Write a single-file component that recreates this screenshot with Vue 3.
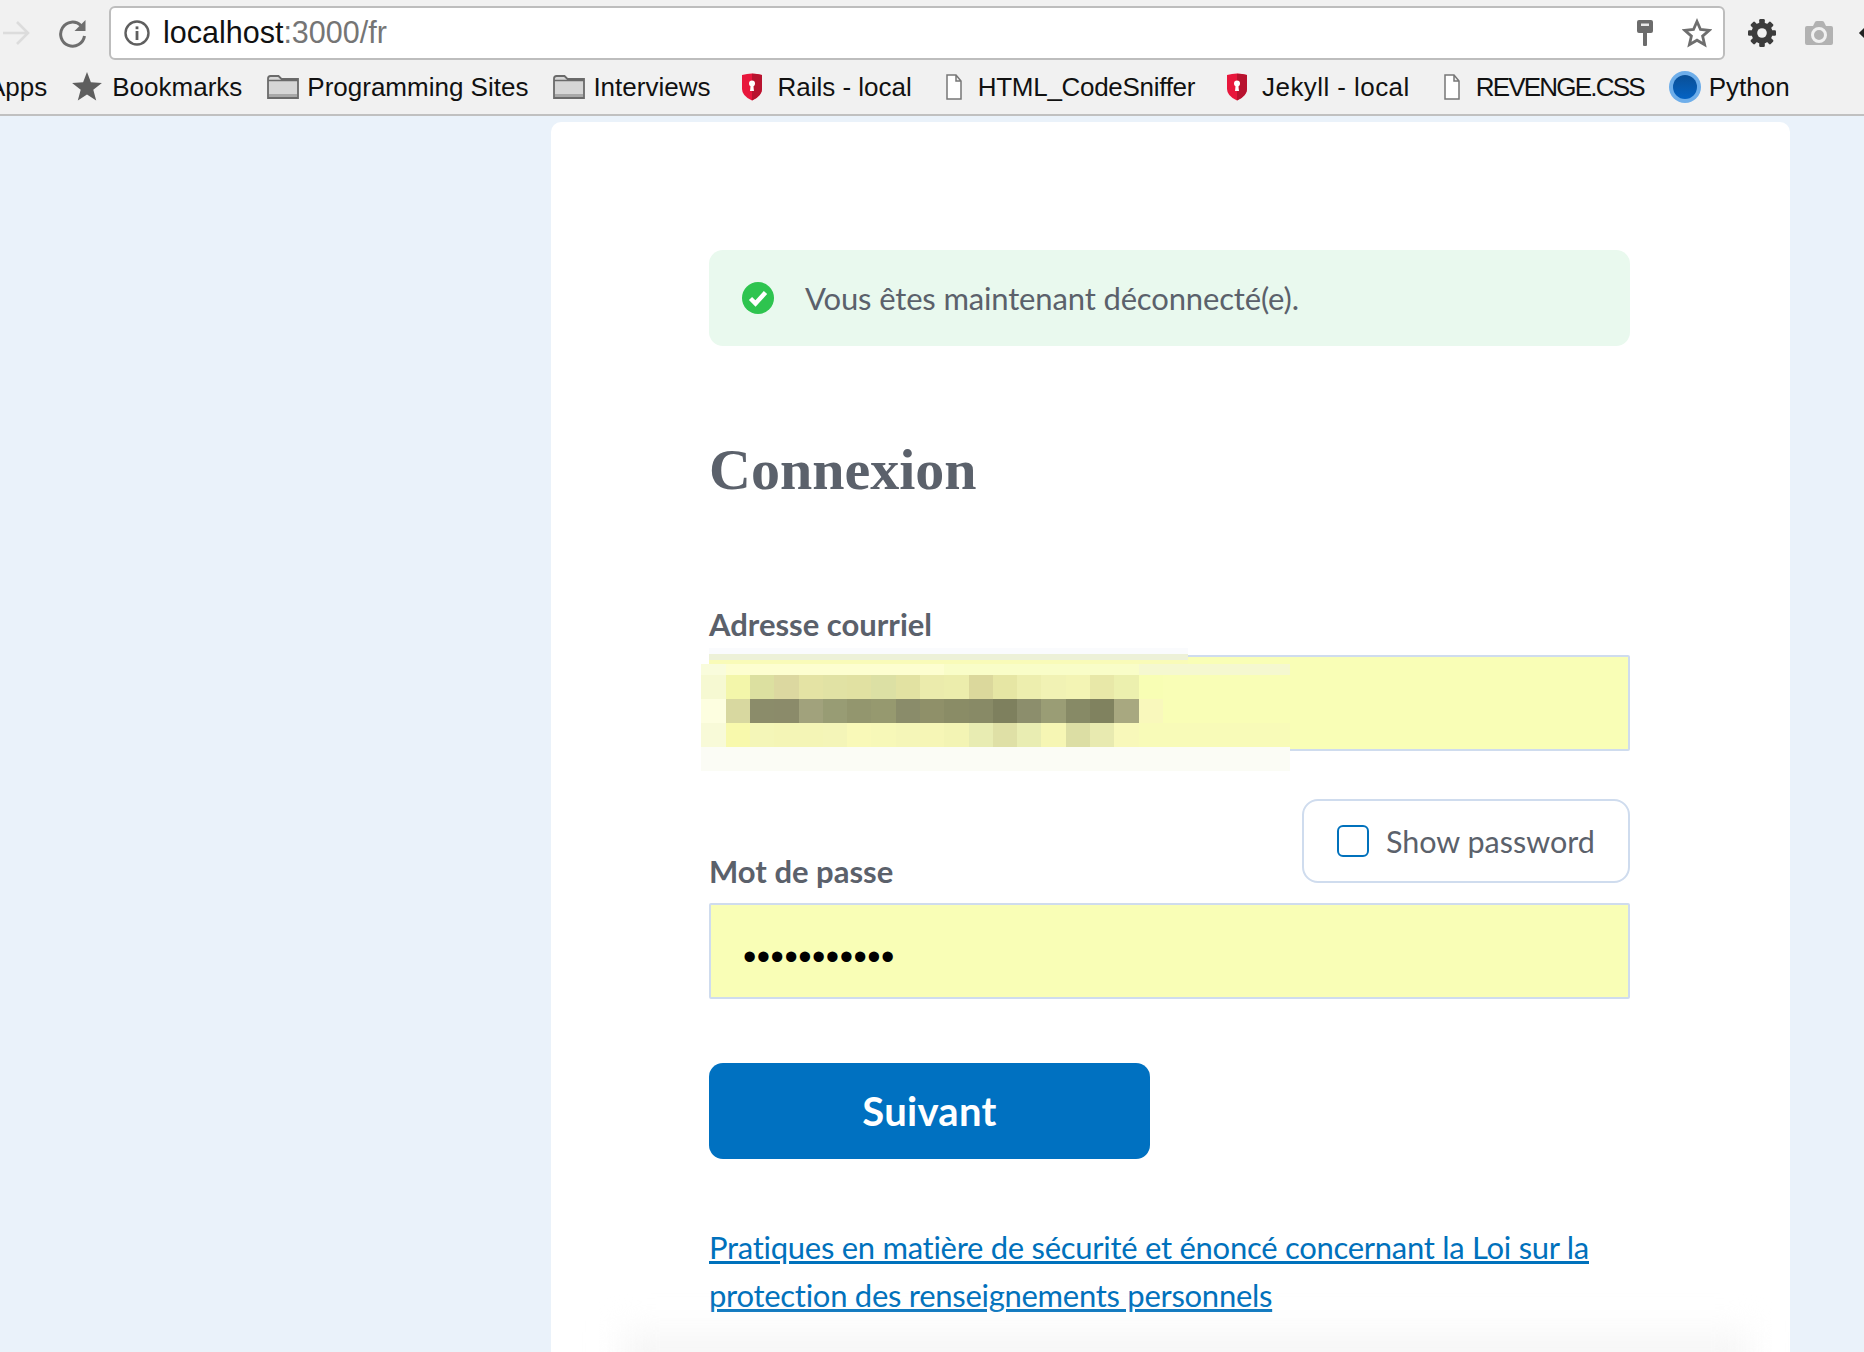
<script setup>
const bookmarks = [
  { icon: "star", label: "Bookmarks", spacing: 0 },
  { icon: "folder", label: "Programming Sites", spacing: 0 },
  { icon: "folder", label: "Interviews", spacing: 0 },
  { icon: "shield", label: "Rails - local", spacing: 0 },
  { icon: "doc", label: "HTML_CodeSniffer", spacing: -0.3 },
  { icon: "shield", label: "Jekyll - local", spacing: 0.43 },
  { icon: "doc", label: "REVENGE.CSS", spacing: -1.8 },
  { icon: "globe", label: "Python", spacing: 0 },
];

// blurred-out email, one array per row of the mosaic
const top = ["f9fcdc", ...Array(9).fill("fdfed0"), ...Array(8).fill("f9fdc8"), ...Array(6).fill("f5f8d0")];
const upper = ["f6f9d2", "f3f6aa", "dce0a0", "dcd8a0", "e4e3a4", "e1e2a4", "e1e1a2", "dce0a4", "e2e2a2", "ebebac", "ecedac", "dbd89c", "e6e6a4", "edeeae", "f1f2b4", "f3f4b4", "e8e8a8", "ecf0ae", "f8feb4", "f9feb6", "f9feb6", "f9feb6", "f9feb6", "f9feb6"];
const dark = ["fdfee0", "d8d8a0", "8b8c6a", "8b8b6a", "a1a27c", "989c74", "93966e", "96996f", "8a8c6a", "8f9069", "8a8c66", "888a66", "7e805e", "8c8e6c", "9a9d75", "878a66", "80825f", "a8a880", "f9f8bc", "f9feb6", "f9feb6", "f9feb6", "f9feb6", "f9feb6"];
const lower = ["f8fad8", "f8f9ac", "f4f6b8", "f4f5b6", "f4f5b6", "f4f5b8", "f9f9b8", "f7f8b8", "f5f6b8", "f6f6b6", "f3f4b4", "e8ecb2", "dfe0a6", "e9edb2", "f6f6b4", "dcdea4", "e8eab0", "f8f8ba", "f8fbb8", "f8fbb8", "f8fbb8", "f8fbb8", "f8fbb8", "f8fbb8"];
const fade = Array(24).fill("fbfcf5");
const mosaic = [
  { h: 11, cells: top },
  { h: 24, cells: upper },
  { h: 24, cells: dark },
  { h: 24, cells: lower },
  { h: 24, cells: fade },
];
const gearTeeth = [0, 45, 90, 135];
</script>

<template>
  <div class="page">
    <header class="browser">
      <div class="toolbar">
        <svg class="nav-arrow" width="28" height="28" viewBox="0 0 28 28">
          <path d="M0 14h25M14 3l11 11-11 11" fill="none" stroke="#dcdcdc" stroke-width="2.6" />
        </svg>
        <svg class="reload" width="30" height="30" viewBox="0 0 30 30">
          <path d="M23 7.5A12 12 0 1 0 26.5 18" fill="none" stroke="#6e6e6e" stroke-width="3" />
          <path d="M27.5 2v11H16.5z" fill="#6e6e6e" />
        </svg>
        <div class="omnibox">
          <svg width="28" height="28" viewBox="0 0 28 28">
            <circle cx="14" cy="14" r="11.5" fill="none" stroke="#5f5f5f" stroke-width="2.4" />
            <rect x="12.6" y="12" width="2.8" height="9" fill="#5f5f5f" />
            <rect x="12.6" y="7.4" width="2.8" height="2.8" fill="#5f5f5f" />
          </svg>
          <span class="url"><span class="host">localhost</span>:3000/fr</span>
          <svg class="key" width="18" height="26" viewBox="0 0 18 26">
            <path d="M3 0h12q2 0 2 2v9q0 2-2 2h-4v12q0 1-1 1H8q-1 0-1-1V13H3q-2 0-2-2V2q0-2 2-2z" fill="#6c6c6c" />
            <rect x="5" y="3.5" width="8" height="2.5" fill="#e8e8e8" />
          </svg>
          <svg width="30" height="30" viewBox="0 0 30 30">
            <path d="M15 3.5l3.5 8 8.8.8-6.7 5.800 2 8.600-7.600-4.500-7.600 4.500 2-8.600-6.700-5.800 8.800-.8z" fill="none" stroke="#6e6e6e" stroke-width="2.8" />
          </svg>
        </div>
        <svg class="gear" width="30" height="30" viewBox="-15 -15 30 30">
          <circle r="10.5" fill="#3c3c3c" />
          <rect v-for="deg in gearTeeth" :key="deg" x="-2.8" y="-14" width="5.6" height="28" rx="1.2" fill="#3c3c3c" :transform="`rotate(${deg})`" />
          <circle r="4.8" fill="#f1f1f1" />
        </svg>
        <svg class="camera" width="32" height="28" viewBox="0 0 32 28">
          <path d="M4 7h6l2-4q.5-1 2-1h5q1.5 0 2 1l2 4h5q2 0 2 2v15q0 2-2 2H4q-2 0-2-2V9q0-2 2-2z" fill="#b2b2b2" />
          <circle cx="16" cy="16" r="6.5" fill="#b2b2b2" stroke="#f1f1f1" stroke-width="3" />
        </svg>
        <span class="chip"></span>
      </div>
      <nav class="bookmarks">
        <span class="apps">Apps</span>
        <a v-for="item in bookmarks" :key="item.label" class="bookmark">
          <svg v-if="item.icon === 'star'" width="30" height="30" viewBox="0 0 30 30">
            <path d="M15 0l3.9 10.3 11 .6-8.6 6.900 2.900 10.700-9.200-6.100-9.200 6.100 2.900-10.700L.1 10.900l11-.6z" fill="#5e5e5e" />
          </svg>
          <svg v-else-if="item.icon === 'folder'" class="icon-folder" width="32" height="24" viewBox="0 0 32 24">
            <path d="M1 23V3.5Q1 1 3.5 1h8l3 3H31v19z" fill="#d6d6d6" stroke="#6a6a6a" stroke-width="1.8" />
            <path d="M1 5.5h30" stroke="#6a6a6a" stroke-width="1.5" />
            <rect x="2" y="19" width="28" height="3" fill="#a8a8a8" />
          </svg>
          <svg v-else-if="item.icon === 'shield'" class="icon-shield" width="22" height="28" viewBox="0 0 22 28">
            <path d="M1 2q10-3 20 0v14q0 7-10 11.5Q1 23 1 16z" fill="#e8173c" />
            <path d="M11 .7q5 0 10 1.3v14q0 7-10 11.5z" fill="#b8132f" />
            <circle cx="11" cy="10.5" r="3" fill="#fff" />
            <path d="M9.8 11h2.4l.8 7h-4z" fill="#fff" />
          </svg>
          <svg v-else-if="item.icon === 'doc'" class="icon-doc" width="16" height="26" viewBox="0 0 16 26">
            <path d="M1 1h9l5 6v18H1zM10 1v6h5" fill="#fff" stroke="#777" stroke-width="1.5" />
          </svg>
          <svg v-else class="icon-globe" width="32" height="32" viewBox="0 0 32 32">
            <defs>
              <linearGradient id="globe-fill" x1="0" y1="0" x2="0" y2="1">
                <stop offset="0" stop-color="#0a4f96" />
                <stop offset="1" stop-color="#0463c4" />
              </linearGradient>
            </defs>
            <circle cx="16" cy="16" r="16" fill="#6eaeea" />
            <circle cx="16" cy="16" r="12" fill="url(#globe-fill)" />
          </svg>
          <span :style="{ letterSpacing: item.spacing + 'px' }">{{ item.label }}</span>
        </a>
      </nav>
    </header>

    <main class="content">
      <section class="card">
        <div class="alert">
          <svg width="32" height="32" viewBox="0 0 32 32">
            <circle cx="16" cy="16" r="16" fill="#2ec44f" />
            <path d="M8.5 16.5l5 5 10-11" fill="none" stroke="#fff" stroke-width="4.5" />
          </svg>
          <p>Vous êtes maintenant déconnecté(e).</p>
        </div>

        <h1>Connexion</h1>

        <label class="label email-label">Adresse courriel</label>
        <div class="field">
          <div class="input"></div>
          <div class="strip"></div>
          <div class="mosaic">
            <div v-for="(row, r) in mosaic" :key="r" class="mosaic-row" :style="{ height: row.h + 'px' }">
              <span v-for="(c, i) in row.cells" :key="i" :style="{ background: '#' + c }"></span>
            </div>
          </div>
        </div>

        <div class="password-head">
          <label class="label">Mot de passe</label>
          <div class="show-password">
            <span class="checkbox"></span>
            <span>Show password</span>
          </div>
        </div>
        <div class="input password">•••••••••••</div>

        <button class="submit">Suivant</button>

        <p class="privacy">
          <a>Pratiques en matière de sécurité et énoncé concernant la Loi sur la<br />protection des renseignements personnels</a>
        </p>
        <div class="bottom-shadow"></div>
      </section>
    </main>
  </div>
</template>

<style>
html,
body {
  margin: 0;
  overflow: hidden;
}
</style>

<style scoped>
.page {
  width: 1864px;
  height: 1352px;
  overflow: hidden;
  display: flex;
  flex-direction: column;
  background: #eaf2fa;
  font-family: "Lato", "Noto Sans", sans-serif;
}

.browser {
  height: 116px;
  box-sizing: border-box;
  flex-shrink: 0;
  background: #f1f1f1;
  border-bottom: 2px solid #c0c0c0;
  font-family: "Liberation Sans", sans-serif;
}

.toolbar {
  height: 66px;
  display: flex;
  align-items: center;
}

.toolbar > * {
  flex-shrink: 0;
}

.nav-arrow {
  margin-left: 3px;
}

.reload {
  margin-left: 27px;
}

.omnibox {
  width: 1616px;
  height: 54px;
  box-sizing: border-box;
  margin-left: 21px;
  margin-top: -1px;
  padding: 0 11px 0 12px;
  display: flex;
  align-items: center;
  background: #fff;
  border: 2px solid #bdbdbd;
  border-radius: 6px;
}

.url {
  flex: 1;
  margin-left: 12px;
  font-size: 30.5px;
  color: #757575;
}

.host {
  color: #111;
}

.key {
  margin-right: 28px;
}

.gear {
  margin-left: 22px;
}

.camera {
  margin-left: 26px;
}

.chip {
  width: 10px;
  height: 10px;
  margin-left: 26px;
  background: #222;
  transform: rotate(45deg);
}

.bookmarks {
  height: 42px;
  display: flex;
  align-items: center;
  margin-left: -12px;
  font-size: 26px;
  color: #111;
  white-space: nowrap;
}

.apps {
  margin-right: 25px;
}

.bookmark {
  display: flex;
  align-items: center;
  gap: 10px;
  margin-right: 25px;
}

.icon-folder,
.icon-globe {
  margin-right: -2px;
}

.icon-shield {
  margin: 0 4px 0 6px;
}

.icon-doc {
  margin: 0 6px 0 9px;
}

.content {
  flex: 1;
  padding: 6px 74px 0 551px;
}

.card {
  position: relative;
  height: 1230px;
  box-sizing: border-box;
  padding: 128px 160px 0 158px;
  background: #fff;
  border-radius: 10px 10px 0 0;
}

.alert {
  height: 96px;
  padding: 0 33px;
  display: flex;
  align-items: center;
  gap: 31px;
  background: #e9f9ee;
  border-radius: 14px;
  color: #5b616b;
  font-size: 31px;
  letter-spacing: -0.15px;
}

.alert p {
  margin: 0;
}

h1 {
  margin: 93px 0 0;
  height: 62px;
  font-family: "Liberation Serif", serif;
  font-size: 58px;
  font-weight: 700;
  line-height: 62px;
  color: #5b616b;
}

.label {
  display: block;
  font-size: 31px;
  font-weight: 700;
  color: #5b616b;
  line-height: 38px;
}

.email-label {
  margin-top: 104px;
}

.field {
  position: relative;
  margin-top: 12px;
}

.input {
  height: 96px;
  box-sizing: border-box;
  background: #f9feb6;
  border: 2px solid #cfdcee;
  border-radius: 2px;
}

.strip {
  position: absolute;
  left: 0;
  top: -7px;
  width: 479px;
  height: 16px;
  background: linear-gradient(#fafbfd 0 6px, #edf1d8 6px 12px, #f9fbb8 12px);
}

.mosaic {
  position: absolute;
  left: -7.7px;
  top: 9px;
}

.mosaic-row {
  display: flex;
  width: 589px;
}

.mosaic-row span {
  width: 24.3px;
  flex-shrink: 0;
}

.mosaic-row span:last-child {
  flex: 1;
}

.password-head {
  display: flex;
  justify-content: space-between;
  align-items: flex-end;
  margin-top: 48px;
  padding-bottom: 4px;
}

.show-password {
  width: 328px;
  height: 84px;
  box-sizing: border-box;
  margin-bottom: 16px;
  padding-left: 33px;
  display: flex;
  align-items: center;
  gap: 17px;
  border: 2px solid #cfdcee;
  border-radius: 16px;
  font-size: 30.5px;
  color: #5b616b;
}

.checkbox {
  width: 32px;
  height: 32px;
  box-sizing: border-box;
  border: 2px solid #0071bc;
  border-radius: 6px;
}

.password-head .label {
  margin-bottom: 9px;
}

.password {
  padding-left: 32px;
  font-family: "Liberation Sans", sans-serif;
  font-size: 38px;
  line-height: 104px;
  letter-spacing: 0.5px;
  color: #000;
}

.submit {
  display: block;
  width: 441px;
  height: 96px;
  margin-top: 64px;
  border: 0;
  border-radius: 14px;
  background: #0071c1;
  color: #fff;
  font-family: inherit;
  font-size: 40px;
  font-weight: 700;
  letter-spacing: 0.3px;
}

.privacy {
  margin: 64px 0 0;
  font-size: 31px;
  line-height: 48px;
  letter-spacing: -0.28px;
  color: #0071bc;
  white-space: nowrap;
}

.privacy a {
  text-decoration: underline;
}

.bottom-shadow {
  position: absolute;
  left: 70px;
  right: 40px;
  bottom: -30px;
  height: 50px;
  background: #f6f6f6;
  filter: blur(16px);
}
</style>
